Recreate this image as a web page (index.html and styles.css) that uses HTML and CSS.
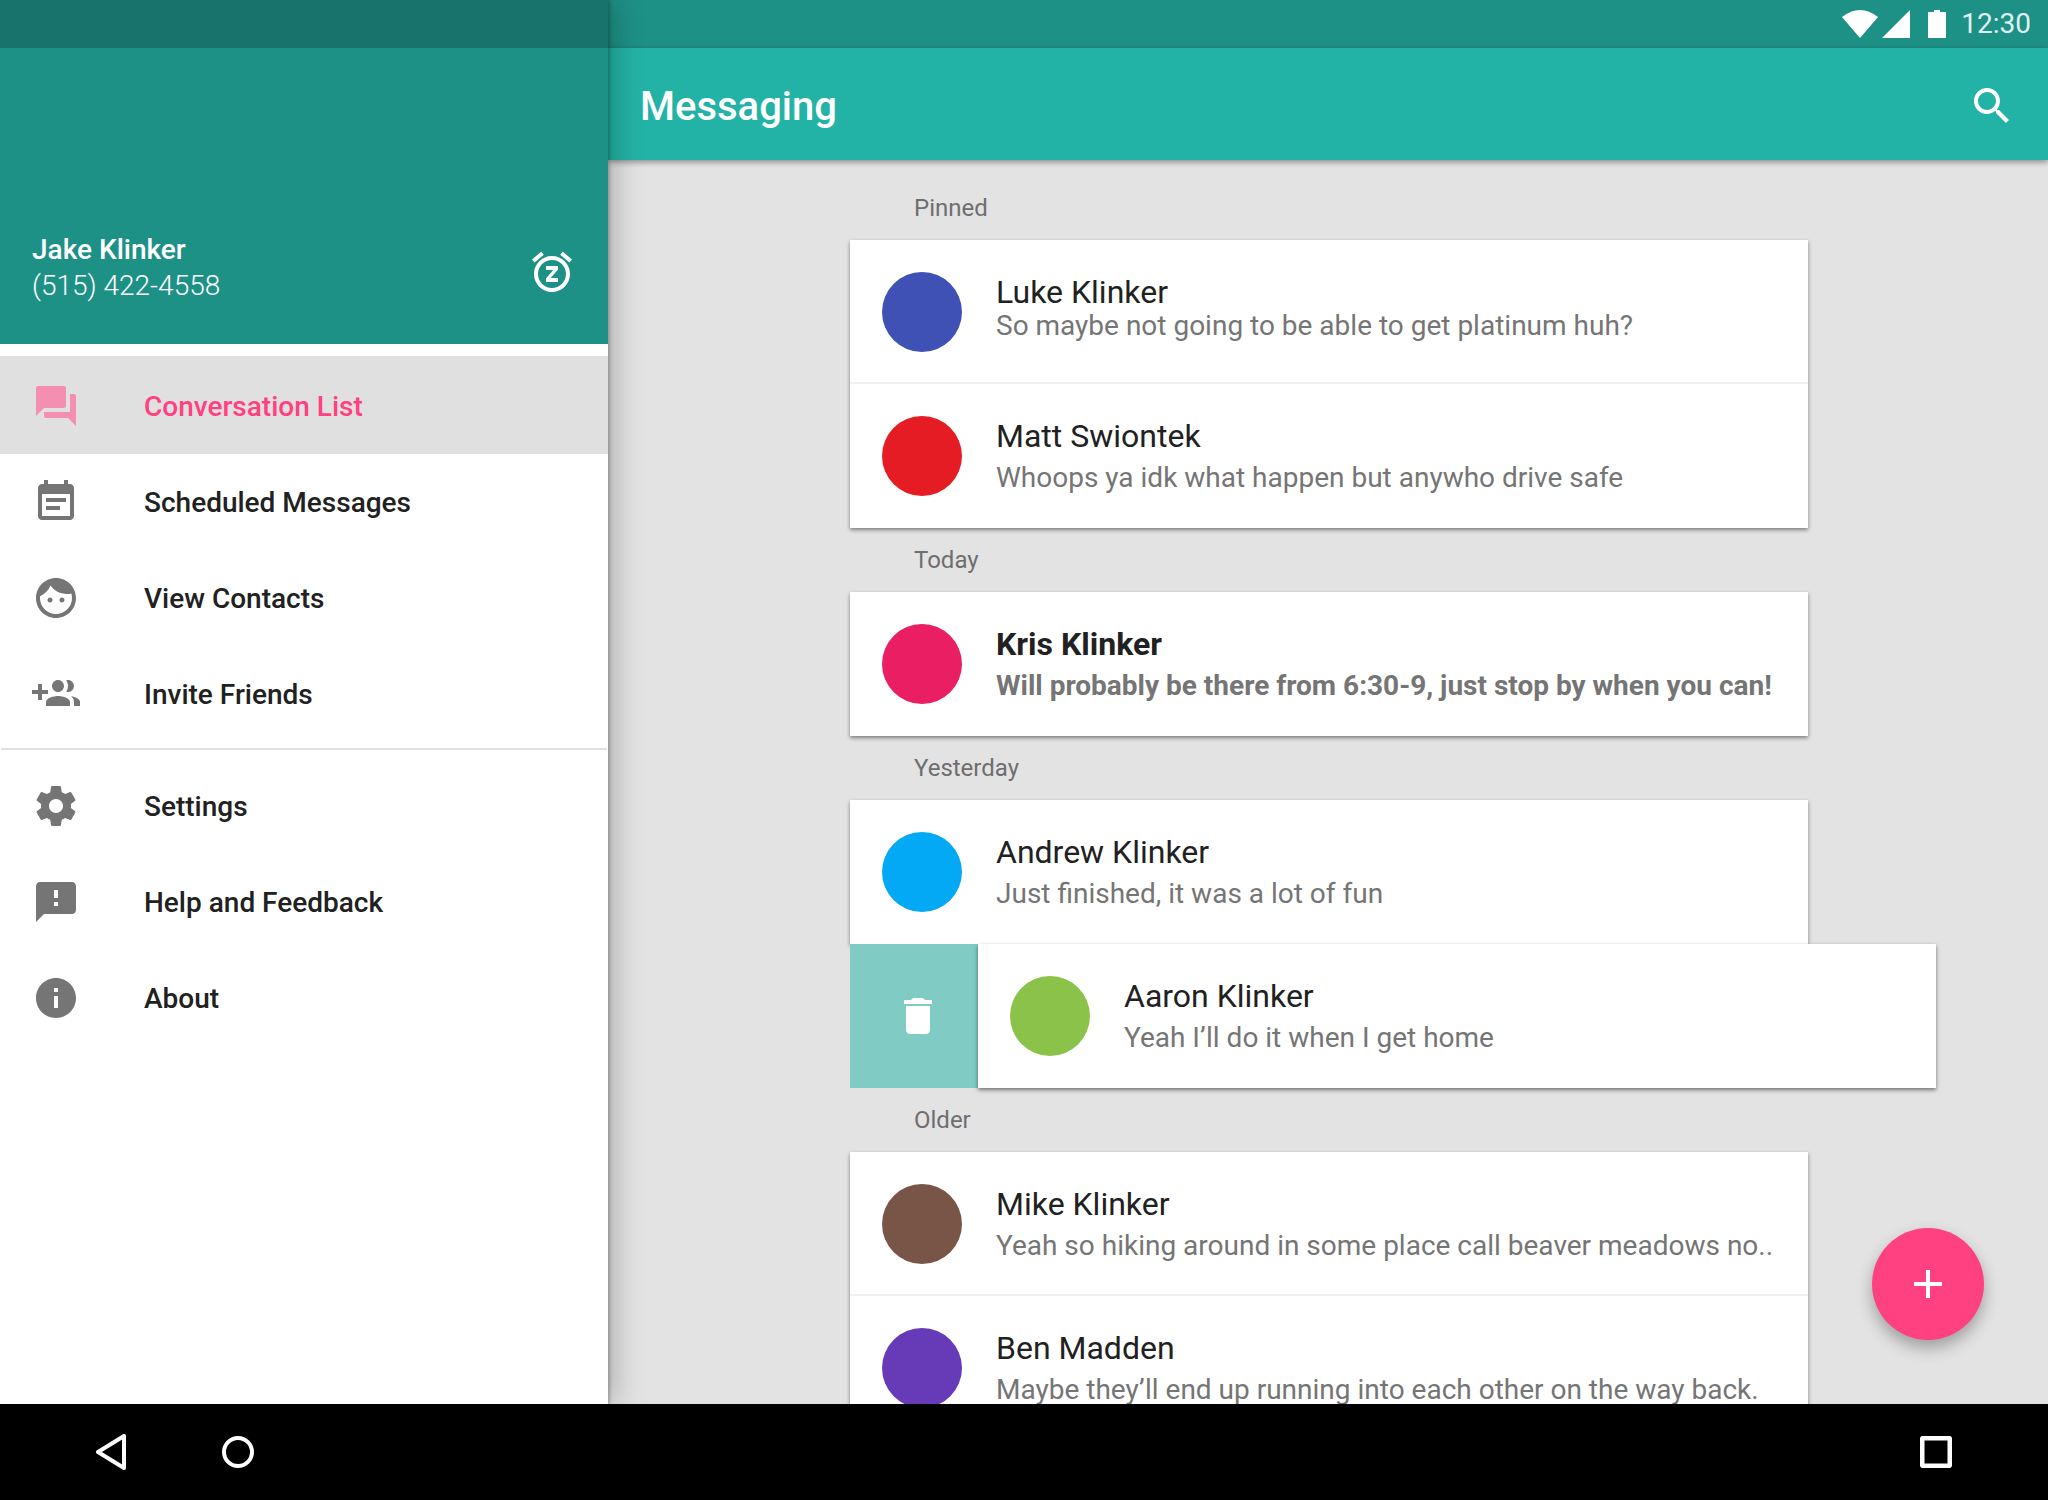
FILE: index.html
```html
<!DOCTYPE html>
<html lang="en">
<head>
<meta charset="utf-8">
<title>Messaging</title>
<link rel="stylesheet" href="styles.css">
</head>
<body>
<div class="screen">
  <div class="stage">
    <aside class="drawer">
      <div class="drawer-status"></div>
      <div class="account">
        <div class="account-text">
          <div class="account-name">Jake Klinker</div>
          <div class="account-phone">(515) 422-4558</div>
        </div>
        <svg class="icon snooze" viewBox="0 0 24 24"><path d="M9 11h3.63L9 15.2V17h6v-2h-3.63L15 10.8V9H9v2zm13-5.28l-4.6-3.86-1.29 1.53 4.6 3.86L22 5.72zM7.88 3.39L6.6 1.86 2 5.71l1.29 1.53 4.59-3.85zM12 4c-4.97 0-9 4.03-9 9s4.02 9 9 9c4.97 0 9-4.03 9-9s-4.03-9-9-9zm0 16c-3.86 0-7-3.14-7-7s3.14-7 7-7 7 3.14 7 7-3.14 7-7 7z"/></svg>
      </div>
      <nav class="menu">
        <a class="menu-item selected"><svg class="icon" viewBox="0 0 24 24"><path d="M21 6h-2v9H6v2c0 .55.45 1 1 1h11l4 4V7c0-.55-.45-1-1-1zm-4 6V3c0-.55-.45-1-1-1H3c-.55 0-1 .45-1 1v14l4-4h10c.55 0 1-.45 1-1z"/></svg><span>Conversation List</span></a>
        <a class="menu-item"><svg class="icon" viewBox="0 0 24 24"><path d="M17 10H7v2h10v-2zm2-7h-1V1h-2v2H8V1H6v2H5c-1.11 0-1.99.9-1.99 2L3 19c0 1.1.89 2 2 2h14c1.1 0 2-.9 2-2V5c0-1.1-.9-2-2-2zm0 16H5V8h14v11zm-5-5H7v2h7v-2z"/></svg><span>Scheduled Messages</span></a>
        <a class="menu-item"><svg class="icon" viewBox="0 0 24 24"><path d="M9 11.75c-.69 0-1.25.56-1.25 1.25s.56 1.25 1.25 1.25 1.25-.56 1.25-1.25-.56-1.25-1.25-1.25zm6 0c-.69 0-1.25.56-1.25 1.25s.56 1.25 1.25 1.25 1.25-.56 1.25-1.25-.56-1.25-1.25-1.25zM12 2C6.48 2 2 6.48 2 12s4.48 10 10 10 10-4.48 10-10S17.52 2 12 2zm0 18c-4.41 0-8-3.59-8-8 0-.29.02-.58.05-.86 2.36-1.05 4.23-2.98 5.21-5.37C11.07 8.33 14.05 10 17.42 10c.78 0 1.53-.09 2.25-.26.21.71.33 1.47.33 2.26 0 4.41-3.59 8-8 8z"/></svg><span>View Contacts</span></a>
        <a class="menu-item"><svg class="icon" viewBox="0 0 24 24"><path d="M8 10H5V7H3v3H0v2h3v3h2v-3h3v-2zm10 1c1.66 0 2.99-1.34 2.99-3S19.66 5 18 5c-.32 0-.63.05-.91.14.57.81.9 1.79.9 2.86s-.34 2.04-.9 2.86c.28.09.59.14.91.14zm-5 0c1.66 0 2.99-1.34 2.99-3S14.66 5 13 5s-3 1.34-3 3 1.34 3 3 3zm6.62 2.16c.83.73 1.38 1.66 1.38 2.84v2h3v-2c0-1.54-2.37-2.49-4.38-2.84zM13 13c-2 0-6 1-6 3v2h12v-2c0-2-4-3-6-3z"/></svg><span>Invite Friends</span></a>
        <div class="menu-divider"></div>
        <a class="menu-item"><svg class="icon" viewBox="0 0 24 24"><path d="M19.43 12.98c.04-.32.07-.64.07-.98s-.03-.66-.07-.98l2.11-1.65c.19-.15.24-.42.12-.64l-2-3.46c-.12-.22-.39-.3-.61-.22l-2.49 1c-.52-.4-1.08-.73-1.69-.98l-.38-2.65C14.46 2.18 14.25 2 14 2h-4c-.25 0-.46.18-.49.42l-.38 2.65c-.61.25-1.17.59-1.69.98l-2.49-1c-.23-.09-.49 0-.61.22l-2 3.46c-.13.22-.07.49.12.64l2.11 1.65c-.04.32-.07.65-.07.98s.03.66.07.98l-2.11 1.65c-.19.15-.24.42-.12.64l2 3.46c.12.22.39.3.61.22l2.49-1c.52.4 1.08.73 1.69.98l.38 2.65c.03.24.24.42.49.42h4c.25 0 .46-.18.49-.42l.38-2.65c.61-.25 1.17-.59 1.69-.98l2.49 1c.23.09.49 0 .61-.22l2-3.46c.12-.22.07-.49-.12-.64l-2.11-1.65zM12 15.5c-1.93 0-3.5-1.57-3.5-3.5s1.57-3.5 3.5-3.5 3.5 1.57 3.5 3.5-1.57 3.5-3.5 3.5z"/></svg><span>Settings</span></a>
        <a class="menu-item"><svg class="icon" viewBox="0 0 24 24"><path d="M20 2H4c-1.1 0-1.99.9-1.99 2L2 22l4-4h14c1.1 0 2-.9 2-2V4c0-1.1-.9-2-2-2zm-7 12h-2v-2h2v2zm0-4h-2V6h2v4z"/></svg><span>Help and Feedback</span></a>
        <a class="menu-item"><svg class="icon" viewBox="0 0 24 24"><path d="M12 2C6.48 2 2 6.48 2 12s4.48 10 10 10 10-4.48 10-10S17.52 2 12 2zm1 15h-2v-6h2v6zm0-8h-2V7h2v2z"/></svg><span>About</span></a>
      </nav>
    </aside>
    <main class="main">
      <div class="status">
        <svg class="st-wifi" viewBox="0 0 36 28"><path d="M18 28L0 7Q18-7 36 7Z"/></svg>
        <svg class="st-signal" viewBox="0 0 28 28"><path d="M28 0V28H0Z"/></svg>
        <svg class="st-battery" viewBox="0 0 18 28"><path d="M6 0H12V2H18V28H0V2H6Z"/></svg>
        <span class="st-time">12:30</span>
      </div>
      <header class="appbar">
        <h1 class="appbar-title">Messaging</h1>
        <svg class="icon search" viewBox="0 0 24 24"><path d="M15.5 14h-.79l-.28-.27C15.41 12.59 16 11.11 16 9.5 16 5.91 13.09 3 9.5 3S3 5.91 3 9.5 5.91 16 9.5 16c1.61 0 3.09-.59 4.23-1.57l.27.28v.79l5 4.99L20.49 19l-4.99-5zm-6 0C7.01 14 5 11.99 5 9.5S7.01 5 9.5 5 14 7.01 14 9.5 11.99 14 9.5 14z"/></svg>
      </header>
      <div class="content">
        <section class="group">
          <div class="group-label">Pinned</div>
          <div class="card">
            <div class="row ruled">
              <div class="avatar indigo"></div>
              <div class="row-text"><div class="name">Luke Klinker</div><div class="snippet tight">So maybe not going to be able to get platinum huh?</div></div>
            </div>
            <div class="row">
              <div class="avatar red"></div>
              <div class="row-text"><div class="name">Matt Swiontek</div><div class="snippet">Whoops ya idk what happen but anywho drive safe</div></div>
            </div>
          </div>
        </section>
        <section class="group">
          <div class="group-label">Today</div>
          <div class="card">
            <div class="row unread">
              <div class="avatar pink"></div>
              <div class="row-text"><div class="name">Kris Klinker</div><div class="snippet">Will probably be there from 6:30-9, just stop by when you can!</div></div>
            </div>
          </div>
        </section>
        <section class="group">
          <div class="group-label">Yesterday</div>
          <div class="card">
            <div class="row">
              <div class="avatar blue"></div>
              <div class="row-text"><div class="name">Andrew Klinker</div><div class="snippet">Just finished, it was a lot of fun</div></div>
            </div>
          </div>
          <div class="swipe">
            <div class="swipe-action"><svg class="icon" viewBox="0 0 24 24"><path d="M6 19c0 1.1.9 2 2 2h8c1.1 0 2-.9 2-2V7H6v12zM19 4h-3.5l-1-1h-5l-1 1H5v2h14V4z"/></svg></div>
            <div class="row swiped">
              <div class="avatar green"></div>
              <div class="row-text"><div class="name">Aaron Klinker</div><div class="snippet">Yeah I’ll do it when I get home</div></div>
            </div>
          </div>
        </section>
        <section class="group">
          <div class="group-label">Older</div>
          <div class="card">
            <div class="row ruled">
              <div class="avatar brown"></div>
              <div class="row-text"><div class="name">Mike Klinker</div><div class="snippet">Yeah so hiking around in some place call beaver meadows no..</div></div>
            </div>
            <div class="row">
              <div class="avatar purple"></div>
              <div class="row-text"><div class="name">Ben Madden</div><div class="snippet">Maybe they’ll end up running into each other on the way back.</div></div>
            </div>
          </div>
        </section>
      </div>
      <button class="fab"><svg viewBox="0 0 28 28"><path d="M12 0h4v12h12v4H16v12h-4V16H0v-4h12z"/></svg></button>
    </main>
  </div>
  <footer class="navbar">
    <svg class="nav-back" viewBox="0 0 30 36"><path d="M28 2V34L2 18Z"/></svg>
    <svg class="nav-home" viewBox="0 0 32 32"><circle cx="16" cy="16" r="14"/></svg>
    <svg class="nav-recent" viewBox="0 0 32 32"><rect x="2" y="2" width="28" height="28" rx="2"/></svg>
  </footer>
</div>
</body>
</html>
```
FILE: styles.css
```css
* { box-sizing: border-box; }
html, body { margin: 0; padding: 0; }
body { font-family: Roboto, "Liberation Sans", sans-serif; background: #000; }

.screen { width: 2048px; height: 1500px; display: flex; flex-direction: column; overflow: hidden; }
.stage { flex: 1; display: flex; min-height: 0; }
.icon { width: 48px; height: 48px; flex: none; display: block; }

/* Drawer */
.drawer { width: 608px; flex: none; background: #fff; position: relative; z-index: 3; box-shadow: 2px 0 3px rgba(0,0,0,.22), 8px 0 28px rgba(0,0,0,.22); }
.drawer-status { height: 48px; background: #17736b; }
.account { height: 296px; background: #1e9187; display: flex; align-items: flex-end; justify-content: space-between; padding: 0 32px 40px; color: #fff; }
.account-name { font-size: 28px; font-weight: 500; line-height: 36px; }
.account-phone { font-size: 28px; font-weight: 300; line-height: 36px; }
.snooze { fill: #fff; margin-bottom: 8px; }
.menu { padding-top: 12px; }
.menu-item { height: 96px; display: flex; align-items: center; gap: 64px; padding-left: 32px; font-size: 28px; font-weight: 500; color: #212121; }
.menu-item .icon { fill: #757575; }
.menu-item.selected { height: 98px; padding-top: 2px; background: #e0e0e0; color: #ff4081; }
.menu-item.selected .icon { fill: #f48fb1; }
.menu-divider { height: 2px; margin: 6px 1px 8px; background: #e0e0e0; }

/* Main */
.main { flex: 1; min-width: 0; display: flex; flex-direction: column; background: #e3e3e3; position: relative; }
.status { height: 48px; flex: none; background: #1e9187; display: flex; align-items: center; justify-content: flex-end; padding-right: 17px; fill: #fff; }
.st-wifi { width: 36px; height: 28px; margin-right: 4px; }
.st-signal { width: 28px; height: 28px; margin-right: 18px; }
.st-battery { width: 18px; height: 28px; margin-right: 15px; }
.st-time { font-size: 28px; color: rgba(255,255,255,.88); line-height: 48px; }
.appbar { height: 112px; flex: none; background: #23b3a6; display: flex; align-items: center; justify-content: space-between; padding: 4px 32px 0; position: relative; z-index: 2; box-shadow: 0 2px 6px rgba(0,0,0,.4); }
.appbar-title { margin: 0; font-size: 40px; font-weight: 500; color: #fff; }
.search { fill: #fff; }
.content { flex: 1; min-height: 0; overflow: hidden; padding: 16px 0 0 242px; }
.group { width: 958px; }
.group-label { height: 64px; line-height: 64px; padding-left: 64px; font-size: 24px; color: #6e6e6e; }

.card { background: #fff; box-shadow: 0 2px 4px rgba(0,0,0,.45); }
.row { height: 144px; display: flex; padding: 32px 0 0 32px; background: #fff; }
.row.ruled { border-bottom: 2px solid #f0f0f0; }
.avatar { width: 80px; height: 80px; border-radius: 50%; flex: none; margin-right: 34px; }
.indigo { background: #3f51b5; }
.red { background: #e51c23; }
.pink { background: #e91e63; }
.blue { background: #03a9f4; }
.green { background: #8bc34a; }
.brown { background: #795548; }
.purple { background: #673ab7; }
.row-text { min-width: 0; white-space: nowrap; }
.name { font-size: 32px; line-height: 40px; color: #212121; }
.snippet { font-size: 28px; line-height: 40px; margin-top: 2px; color: #757575; }
.snippet.tight { margin-top: -6px; }
.unread .name, .unread .snippet { font-weight: 700; }

.swipe { display: flex; height: 144px; width: 958px; background: #80cbc4; position: relative; }
.swipe-action { width: 128px; flex: none; display: flex; align-items: center; justify-content: center; padding-left: 8px; fill: #fff; }
.row.swiped { width: 958px; flex: none; box-shadow: 0 2px 4px rgba(0,0,0,.5); }

.fab { position: absolute; right: 64px; bottom: 64px; width: 112px; height: 112px; border: 0; padding: 0; border-radius: 50%; background: #ff4081; display: flex; align-items: center; justify-content: center; fill: #fff; box-shadow: 0 8px 16px rgba(0,0,0,.3); }
.fab svg { width: 28px; height: 28px; }

/* Navigation bar */
.navbar { height: 96px; flex: none; background: #000; display: flex; align-items: center; padding: 0 96px 0 96px; fill: none; stroke: #fff; stroke-width: 4; }
.nav-back { width: 30px; height: 36px; margin-right: 96px; stroke-linejoin: round; }
.nav-home { width: 32px; height: 32px; }
.nav-recent { width: 32px; height: 32px; margin-left: auto; stroke-width: 5; }
```
